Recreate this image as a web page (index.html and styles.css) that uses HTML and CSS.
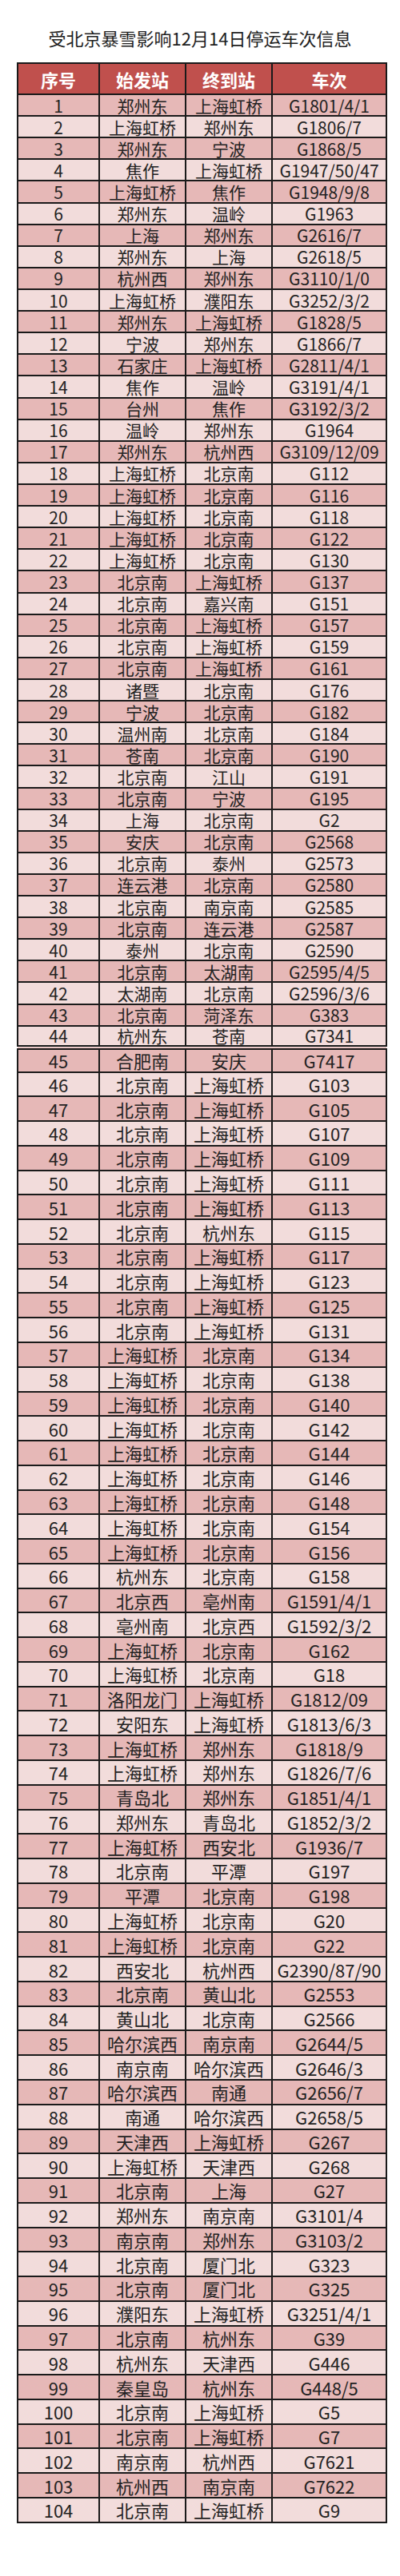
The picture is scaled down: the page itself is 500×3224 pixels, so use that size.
FILE: index.html
```html
<!DOCTYPE html>
<html lang="zh-CN">
<head>
<meta charset="utf-8">
<title>受北京暴雪影响12月14日停运车次信息</title>
<link rel="stylesheet" href="styles.css">
</head>
<body>
<h1 class="title">受北京暴雪影响12月14日停运车次信息</h1>
<table class="trains">
<colgroup><col class="c-no"><col class="c-from"><col class="c-to"><col class="c-train"></colgroup>
<thead>
<tr><th>序号</th><th>始发站</th><th>终到站</th><th>车次</th></tr>
</thead>
<tbody class="part1">
<tr><td>1</td><td>郑州东</td><td>上海虹桥</td><td>G1801/4/1</td></tr>
<tr><td>2</td><td>上海虹桥</td><td>郑州东</td><td>G1806/7</td></tr>
<tr><td>3</td><td>郑州东</td><td>宁波</td><td>G1868/5</td></tr>
<tr><td>4</td><td>焦作</td><td>上海虹桥</td><td>G1947/50/47</td></tr>
<tr><td>5</td><td>上海虹桥</td><td>焦作</td><td>G1948/9/8</td></tr>
<tr><td>6</td><td>郑州东</td><td>温岭</td><td>G1963</td></tr>
<tr><td>7</td><td>上海</td><td>郑州东</td><td>G2616/7</td></tr>
<tr><td>8</td><td>郑州东</td><td>上海</td><td>G2618/5</td></tr>
<tr><td>9</td><td>杭州西</td><td>郑州东</td><td>G3110/1/0</td></tr>
<tr><td>10</td><td>上海虹桥</td><td>濮阳东</td><td>G3252/3/2</td></tr>
<tr><td>11</td><td>郑州东</td><td>上海虹桥</td><td>G1828/5</td></tr>
<tr><td>12</td><td>宁波</td><td>郑州东</td><td>G1866/7</td></tr>
<tr><td>13</td><td>石家庄</td><td>上海虹桥</td><td>G2811/4/1</td></tr>
<tr><td>14</td><td>焦作</td><td>温岭</td><td>G3191/4/1</td></tr>
<tr><td>15</td><td>台州</td><td>焦作</td><td>G3192/3/2</td></tr>
<tr><td>16</td><td>温岭</td><td>郑州东</td><td>G1964</td></tr>
<tr><td>17</td><td>郑州东</td><td>杭州西</td><td>G3109/12/09</td></tr>
<tr><td>18</td><td>上海虹桥</td><td>北京南</td><td>G112</td></tr>
<tr><td>19</td><td>上海虹桥</td><td>北京南</td><td>G116</td></tr>
<tr><td>20</td><td>上海虹桥</td><td>北京南</td><td>G118</td></tr>
<tr><td>21</td><td>上海虹桥</td><td>北京南</td><td>G122</td></tr>
<tr><td>22</td><td>上海虹桥</td><td>北京南</td><td>G130</td></tr>
<tr><td>23</td><td>北京南</td><td>上海虹桥</td><td>G137</td></tr>
<tr><td>24</td><td>北京南</td><td>嘉兴南</td><td>G151</td></tr>
<tr><td>25</td><td>北京南</td><td>上海虹桥</td><td>G157</td></tr>
<tr><td>26</td><td>北京南</td><td>上海虹桥</td><td>G159</td></tr>
<tr><td>27</td><td>北京南</td><td>上海虹桥</td><td>G161</td></tr>
<tr><td>28</td><td>诸暨</td><td>北京南</td><td>G176</td></tr>
<tr><td>29</td><td>宁波</td><td>北京南</td><td>G182</td></tr>
<tr><td>30</td><td>温州南</td><td>北京南</td><td>G184</td></tr>
<tr><td>31</td><td>苍南</td><td>北京南</td><td>G190</td></tr>
<tr><td>32</td><td>北京南</td><td>江山</td><td>G191</td></tr>
<tr><td>33</td><td>北京南</td><td>宁波</td><td>G195</td></tr>
<tr><td>34</td><td>上海</td><td>北京南</td><td>G2</td></tr>
<tr><td>35</td><td>安庆</td><td>北京南</td><td>G2568</td></tr>
<tr><td>36</td><td>北京南</td><td>泰州</td><td>G2573</td></tr>
<tr><td>37</td><td>连云港</td><td>北京南</td><td>G2580</td></tr>
<tr><td>38</td><td>北京南</td><td>南京南</td><td>G2585</td></tr>
<tr><td>39</td><td>北京南</td><td>连云港</td><td>G2587</td></tr>
<tr><td>40</td><td>泰州</td><td>北京南</td><td>G2590</td></tr>
<tr><td>41</td><td>北京南</td><td>太湖南</td><td>G2595/4/5</td></tr>
<tr><td>42</td><td>太湖南</td><td>北京南</td><td>G2596/3/6</td></tr>
<tr><td>43</td><td>北京南</td><td>菏泽东</td><td>G383</td></tr>
<tr><td>44</td><td>杭州东</td><td>苍南</td><td>G7341</td></tr>
</tbody>
<tbody class="part2">
<tr class="first"><td>45</td><td>合肥南</td><td>安庆</td><td>G7417</td></tr>
<tr><td>46</td><td>北京南</td><td>上海虹桥</td><td>G103</td></tr>
<tr><td>47</td><td>北京南</td><td>上海虹桥</td><td>G105</td></tr>
<tr><td>48</td><td>北京南</td><td>上海虹桥</td><td>G107</td></tr>
<tr><td>49</td><td>北京南</td><td>上海虹桥</td><td>G109</td></tr>
<tr><td>50</td><td>北京南</td><td>上海虹桥</td><td>G111</td></tr>
<tr><td>51</td><td>北京南</td><td>上海虹桥</td><td>G113</td></tr>
<tr><td>52</td><td>北京南</td><td>杭州东</td><td>G115</td></tr>
<tr><td>53</td><td>北京南</td><td>上海虹桥</td><td>G117</td></tr>
<tr><td>54</td><td>北京南</td><td>上海虹桥</td><td>G123</td></tr>
<tr><td>55</td><td>北京南</td><td>上海虹桥</td><td>G125</td></tr>
<tr><td>56</td><td>北京南</td><td>上海虹桥</td><td>G131</td></tr>
<tr><td>57</td><td>上海虹桥</td><td>北京南</td><td>G134</td></tr>
<tr><td>58</td><td>上海虹桥</td><td>北京南</td><td>G138</td></tr>
<tr><td>59</td><td>上海虹桥</td><td>北京南</td><td>G140</td></tr>
<tr><td>60</td><td>上海虹桥</td><td>北京南</td><td>G142</td></tr>
<tr><td>61</td><td>上海虹桥</td><td>北京南</td><td>G144</td></tr>
<tr><td>62</td><td>上海虹桥</td><td>北京南</td><td>G146</td></tr>
<tr><td>63</td><td>上海虹桥</td><td>北京南</td><td>G148</td></tr>
<tr><td>64</td><td>上海虹桥</td><td>北京南</td><td>G154</td></tr>
<tr><td>65</td><td>上海虹桥</td><td>北京南</td><td>G156</td></tr>
<tr><td>66</td><td>杭州东</td><td>北京南</td><td>G158</td></tr>
<tr><td>67</td><td>北京西</td><td>亳州南</td><td>G1591/4/1</td></tr>
<tr><td>68</td><td>亳州南</td><td>北京西</td><td>G1592/3/2</td></tr>
<tr><td>69</td><td>上海虹桥</td><td>北京南</td><td>G162</td></tr>
<tr><td>70</td><td>上海虹桥</td><td>北京南</td><td>G18</td></tr>
<tr><td>71</td><td>洛阳龙门</td><td>上海虹桥</td><td>G1812/09</td></tr>
<tr><td>72</td><td>安阳东</td><td>上海虹桥</td><td>G1813/6/3</td></tr>
<tr><td>73</td><td>上海虹桥</td><td>郑州东</td><td>G1818/9</td></tr>
<tr><td>74</td><td>上海虹桥</td><td>郑州东</td><td>G1826/7/6</td></tr>
<tr><td>75</td><td>青岛北</td><td>郑州东</td><td>G1851/4/1</td></tr>
<tr><td>76</td><td>郑州东</td><td>青岛北</td><td>G1852/3/2</td></tr>
<tr><td>77</td><td>上海虹桥</td><td>西安北</td><td>G1936/7</td></tr>
<tr><td>78</td><td>北京南</td><td>平潭</td><td>G197</td></tr>
<tr><td>79</td><td>平潭</td><td>北京南</td><td>G198</td></tr>
<tr><td>80</td><td>上海虹桥</td><td>北京南</td><td>G20</td></tr>
<tr><td>81</td><td>上海虹桥</td><td>北京南</td><td>G22</td></tr>
<tr><td>82</td><td>西安北</td><td>杭州西</td><td>G2390/87/90</td></tr>
<tr><td>83</td><td>北京南</td><td>黄山北</td><td>G2553</td></tr>
<tr><td>84</td><td>黄山北</td><td>北京南</td><td>G2566</td></tr>
<tr><td>85</td><td>哈尔滨西</td><td>南京南</td><td>G2644/5</td></tr>
<tr><td>86</td><td>南京南</td><td>哈尔滨西</td><td>G2646/3</td></tr>
<tr><td>87</td><td>哈尔滨西</td><td>南通</td><td>G2656/7</td></tr>
<tr><td>88</td><td>南通</td><td>哈尔滨西</td><td>G2658/5</td></tr>
<tr><td>89</td><td>天津西</td><td>上海虹桥</td><td>G267</td></tr>
<tr><td>90</td><td>上海虹桥</td><td>天津西</td><td>G268</td></tr>
<tr><td>91</td><td>北京南</td><td>上海</td><td>G27</td></tr>
<tr><td>92</td><td>郑州东</td><td>南京南</td><td>G3101/4</td></tr>
<tr><td>93</td><td>南京南</td><td>郑州东</td><td>G3103/2</td></tr>
<tr><td>94</td><td>北京南</td><td>厦门北</td><td>G323</td></tr>
<tr><td>95</td><td>北京南</td><td>厦门北</td><td>G325</td></tr>
<tr><td>96</td><td>濮阳东</td><td>上海虹桥</td><td>G3251/4/1</td></tr>
<tr><td>97</td><td>北京南</td><td>杭州东</td><td>G39</td></tr>
<tr><td>98</td><td>杭州东</td><td>天津西</td><td>G446</td></tr>
<tr><td>99</td><td>秦皇岛</td><td>杭州东</td><td>G448/5</td></tr>
<tr><td>100</td><td>北京南</td><td>上海虹桥</td><td>G5</td></tr>
<tr><td>101</td><td>北京南</td><td>上海虹桥</td><td>G7</td></tr>
<tr><td>102</td><td>南京南</td><td>杭州西</td><td>G7621</td></tr>
<tr><td>103</td><td>杭州西</td><td>南京南</td><td>G7622</td></tr>
<tr><td>104</td><td>北京南</td><td>上海虹桥</td><td>G9</td></tr>
</tbody>
</table>
</body>
</html>
```
FILE: styles.css
```css
html, body {
  margin: 0;
  padding: 0;
  background: #ffffff;
}

body {
  width: 500px;
  font-family: "Noto Sans CJK SC", "Noto Sans", sans-serif;
  color: #222222;
}

.title {
  margin: 0 0 16px 0;
  padding-top: 32px;
  font-size: 22px;
  line-height: 30px;
  font-weight: normal;
  text-align: center;
  color: #1e1e1e;
}

.trains {
  margin-left: 21px;
  width: 461px;
  border-collapse: collapse;
  table-layout: fixed;
}

.c-no { width: 102px; }
.c-from { width: 108px; }
.c-to { width: 108px; }
.c-train { width: 143px; }

.trains th,
.trains td {
  border: 2px solid #1a1a1a;
  padding: 0;
  text-align: center;
  vertical-align: middle;
  white-space: nowrap;
}

.trains thead tr {
  height: 39px;
}

.trains th {
  background: #c0504d;
  color: #ffffff;
  font-size: 22px;
  line-height: 24px;
  font-weight: bold;
}

.trains td {
  color: #222222;
}

.part1 tr {
  height: 27.11px;
}

.part1 td {
  font-size: 21px;
  line-height: 22px;
}

.part2 tr {
  height: 30.78px;
}

.part2 td {
  font-size: 22px;
  line-height: 24px;
}

.part2 tr.first td {
  border-top: 6px double #1a1a1a;
}

.trains tbody tr:nth-child(odd) td {
  background: #e6b8b7;
}

.trains tbody tr:nth-child(even) td {
  background: #f2dcdb;
}
```
